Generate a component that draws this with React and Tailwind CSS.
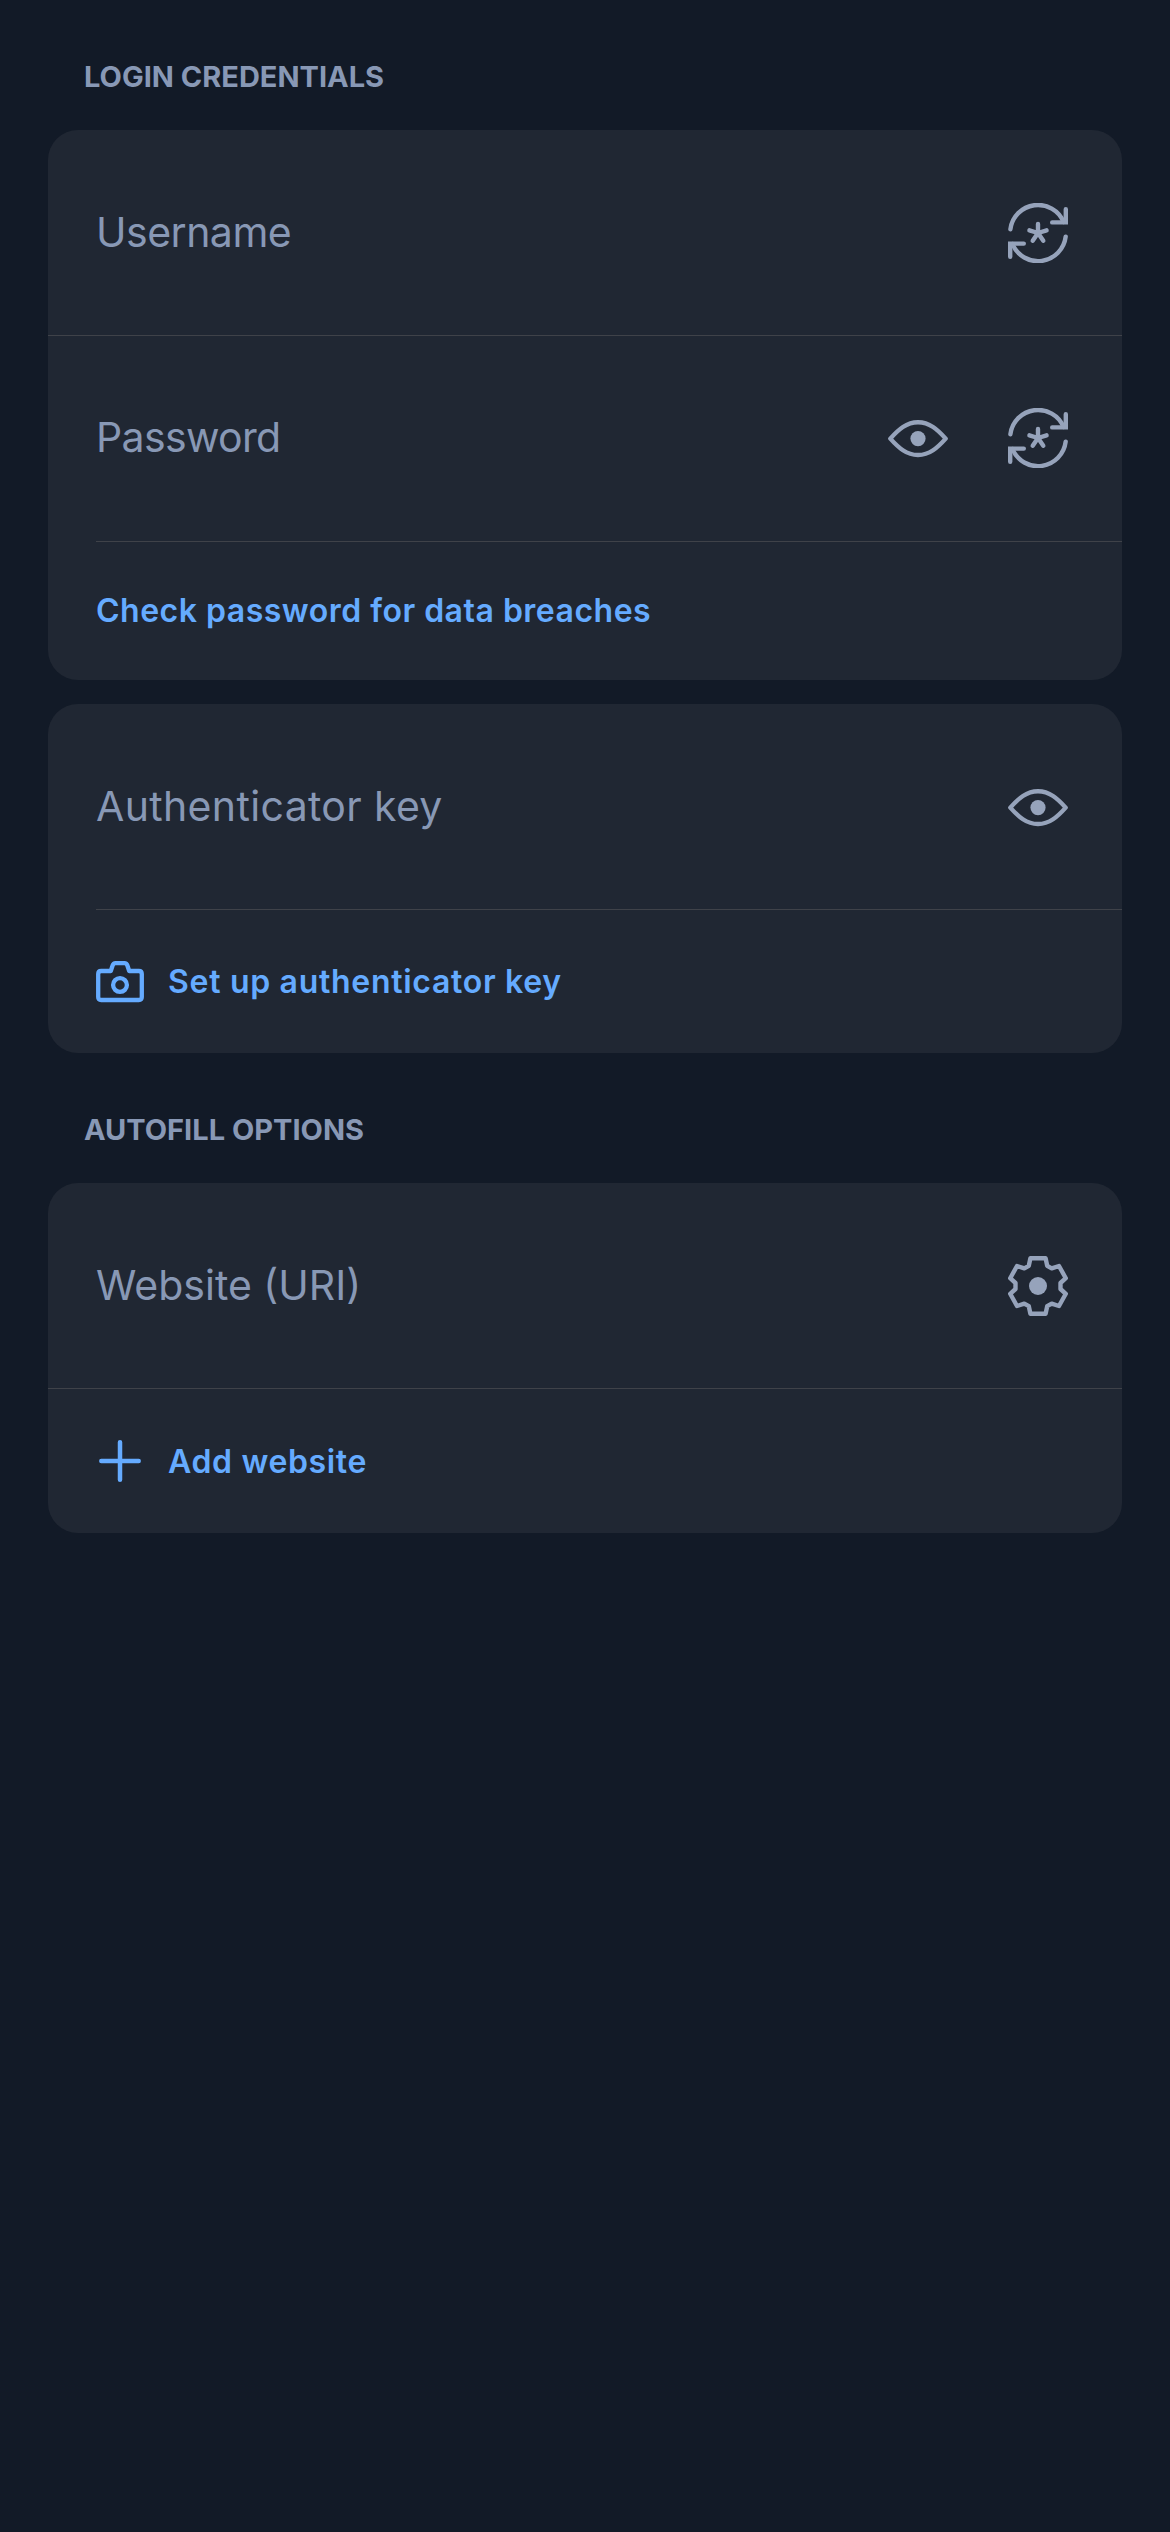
function GenerateIcon() {
  return (
    <svg viewBox="0 0 60 60" className="size-[60px]" fill="none" stroke="currentColor" strokeWidth="4.4" strokeLinecap="round">
      <path d="M2.4 26.2A27.8 27.8 0 0 1 55.6 19" />
      <path d="M57.8 6.2V19.4H44.2" />
      <path d="M57.7 33.6A27.8 27.8 0 0 1 4.4 41" />
      <path d="M2.2 53.8V40.6H15.8" />
      <path d="M30 30V21M30 30L21.4 27.3M30 30L38.6 27.3M30 30L24.7 37.8M30 30L35.3 37.8" />
    </svg>
  );
}

function EyeIcon() {
  return (
    <svg viewBox="0 0 60 60" className="size-[60px]" fill="none" stroke="currentColor" strokeWidth="4.4" strokeLinejoin="round">
      <path d="M2.3 30.6C10.5 21.5 18.5 14.2 30 14.2S49.5 21.5 57.7 30.6C49.5 39.7 41.5 47 30 47S10.5 39.7 2.3 30.6Z" />
      <circle cx="30" cy="30.6" r="7.6" fill="currentColor" stroke="none" />
    </svg>
  );
}

function GearIcon() {
  return (
    <svg viewBox="0 0 60 60" className="size-[60px]" fill="none" stroke="currentColor" strokeWidth="4.4" strokeLinejoin="round">
      <path d="M22.4 2.2H37.6L39.2 9.8L43.7 12.4L51 10L57.8 22.2L52.5 27V33L57.8 37.8L51 50L43.7 47.6L39.2 50.2L37.6 57.8H22.4L20.8 50.2L16.3 47.6L9 50L2.2 37.8L7.5 33V27L2.2 22.2L9 10L16.3 12.4L20.8 9.8Z" />
      <circle cx="30" cy="30" r="9" fill="currentColor" stroke="none" />
    </svg>
  );
}

function CameraIcon() {
  return (
    <svg viewBox="0 0 48 42" className="h-[42px] w-12" fill="none" stroke="currentColor" strokeWidth="4.3" strokeLinejoin="round">
      <path d="M5.2 10H14.8L16.6 4.5Q17.3 2.2 19.6 2.2H28.4Q30.7 2.2 31.4 4.5L33.2 10H42.8Q45.8 10 45.8 13V36Q45.8 39 42.8 39H5.2Q2.2 39 2.2 36V13Q2.2 10 5.2 10Z" />
      <circle cx="24" cy="24" r="6.9" />
    </svg>
  );
}

function PlusIcon() {
  return (
    <svg viewBox="0 0 48 42" className="h-[42px] w-12" fill="none" stroke="currentColor" strokeWidth="4.5" strokeLinecap="round">
      <path d="M5.3 21H42.7M24 2.3V39.7" />
    </svg>
  );
}

function Heading({ children }) {
  return <h2 className="ml-[84px] text-[29px] leading-9 font-[650] text-[#8898b5]">{children}</h2>;
}

function Card({ children }) {
  return <section className="mx-12 overflow-hidden rounded-[30px] bg-[#202733]">{children}</section>;
}

function Divider({ inset }) {
  return <div className={inset ? "ml-12 h-px bg-[#3f4249]" : "h-px bg-[#3f4249]"} />;
}

function Field({ label, className = "pt-px", spacing = "", children }) {
  return (
    <div className={`flex h-[205px] items-center justify-between pr-[54px] pl-12 text-[41px] ${className}`}>
      <span className={`text-[#8898b5] ${spacing}`}>{label}</span>
      <div className="flex gap-[60px] text-[#96a3bb]">{children}</div>
    </div>
  );
}

function Action({ children, className = "" }) {
  return (
    <button className={`flex w-full items-center gap-6 pl-12 text-left text-[32px] font-semibold text-[#65abff] ${className}`}>
      {children}
    </button>
  );
}

export default function App() {
  return (
    <main className="min-h-[2532px] bg-[#121a27] pt-[59px] font-['Inter',sans-serif]">
      <Heading>LOGIN CREDENTIALS</Heading>
      <div className="mt-[35px] flex flex-col gap-6">
        <Card>
          <Field label="Username" spacing="tracking-[-0.5px]">
            <GenerateIcon />
          </Field>
          <Divider />
          <Field label="Password" spacing="tracking-[-0.65px]" className="pb-px">
            <EyeIcon />
            <GenerateIcon />
          </Field>
          <Divider inset />
          <Action className="h-[138px] tracking-[0.5px]">Check password for data breaches</Action>
        </Card>
        <Card>
          <Field label="Authenticator key" spacing="tracking-[0.35px]">
            <EyeIcon />
          </Field>
          <Divider inset />
          <Action className="h-[143px] tracking-[0.7px]">
            <CameraIcon />
            Set up authenticator key
          </Action>
        </Card>
      </div>
      <div className="mt-[59px] mb-[35px]">
        <Heading>AUTOFILL OPTIONS</Heading>
      </div>
      <Card>
        <Field label="Website (URI)">
          <GearIcon />
        </Field>
        <Divider />
        <Action className="h-36 tracking-[0.65px]">
          <PlusIcon />
          <span className="pt-0.5">Add website</span>
        </Action>
      </Card>
    </main>
  );
}
